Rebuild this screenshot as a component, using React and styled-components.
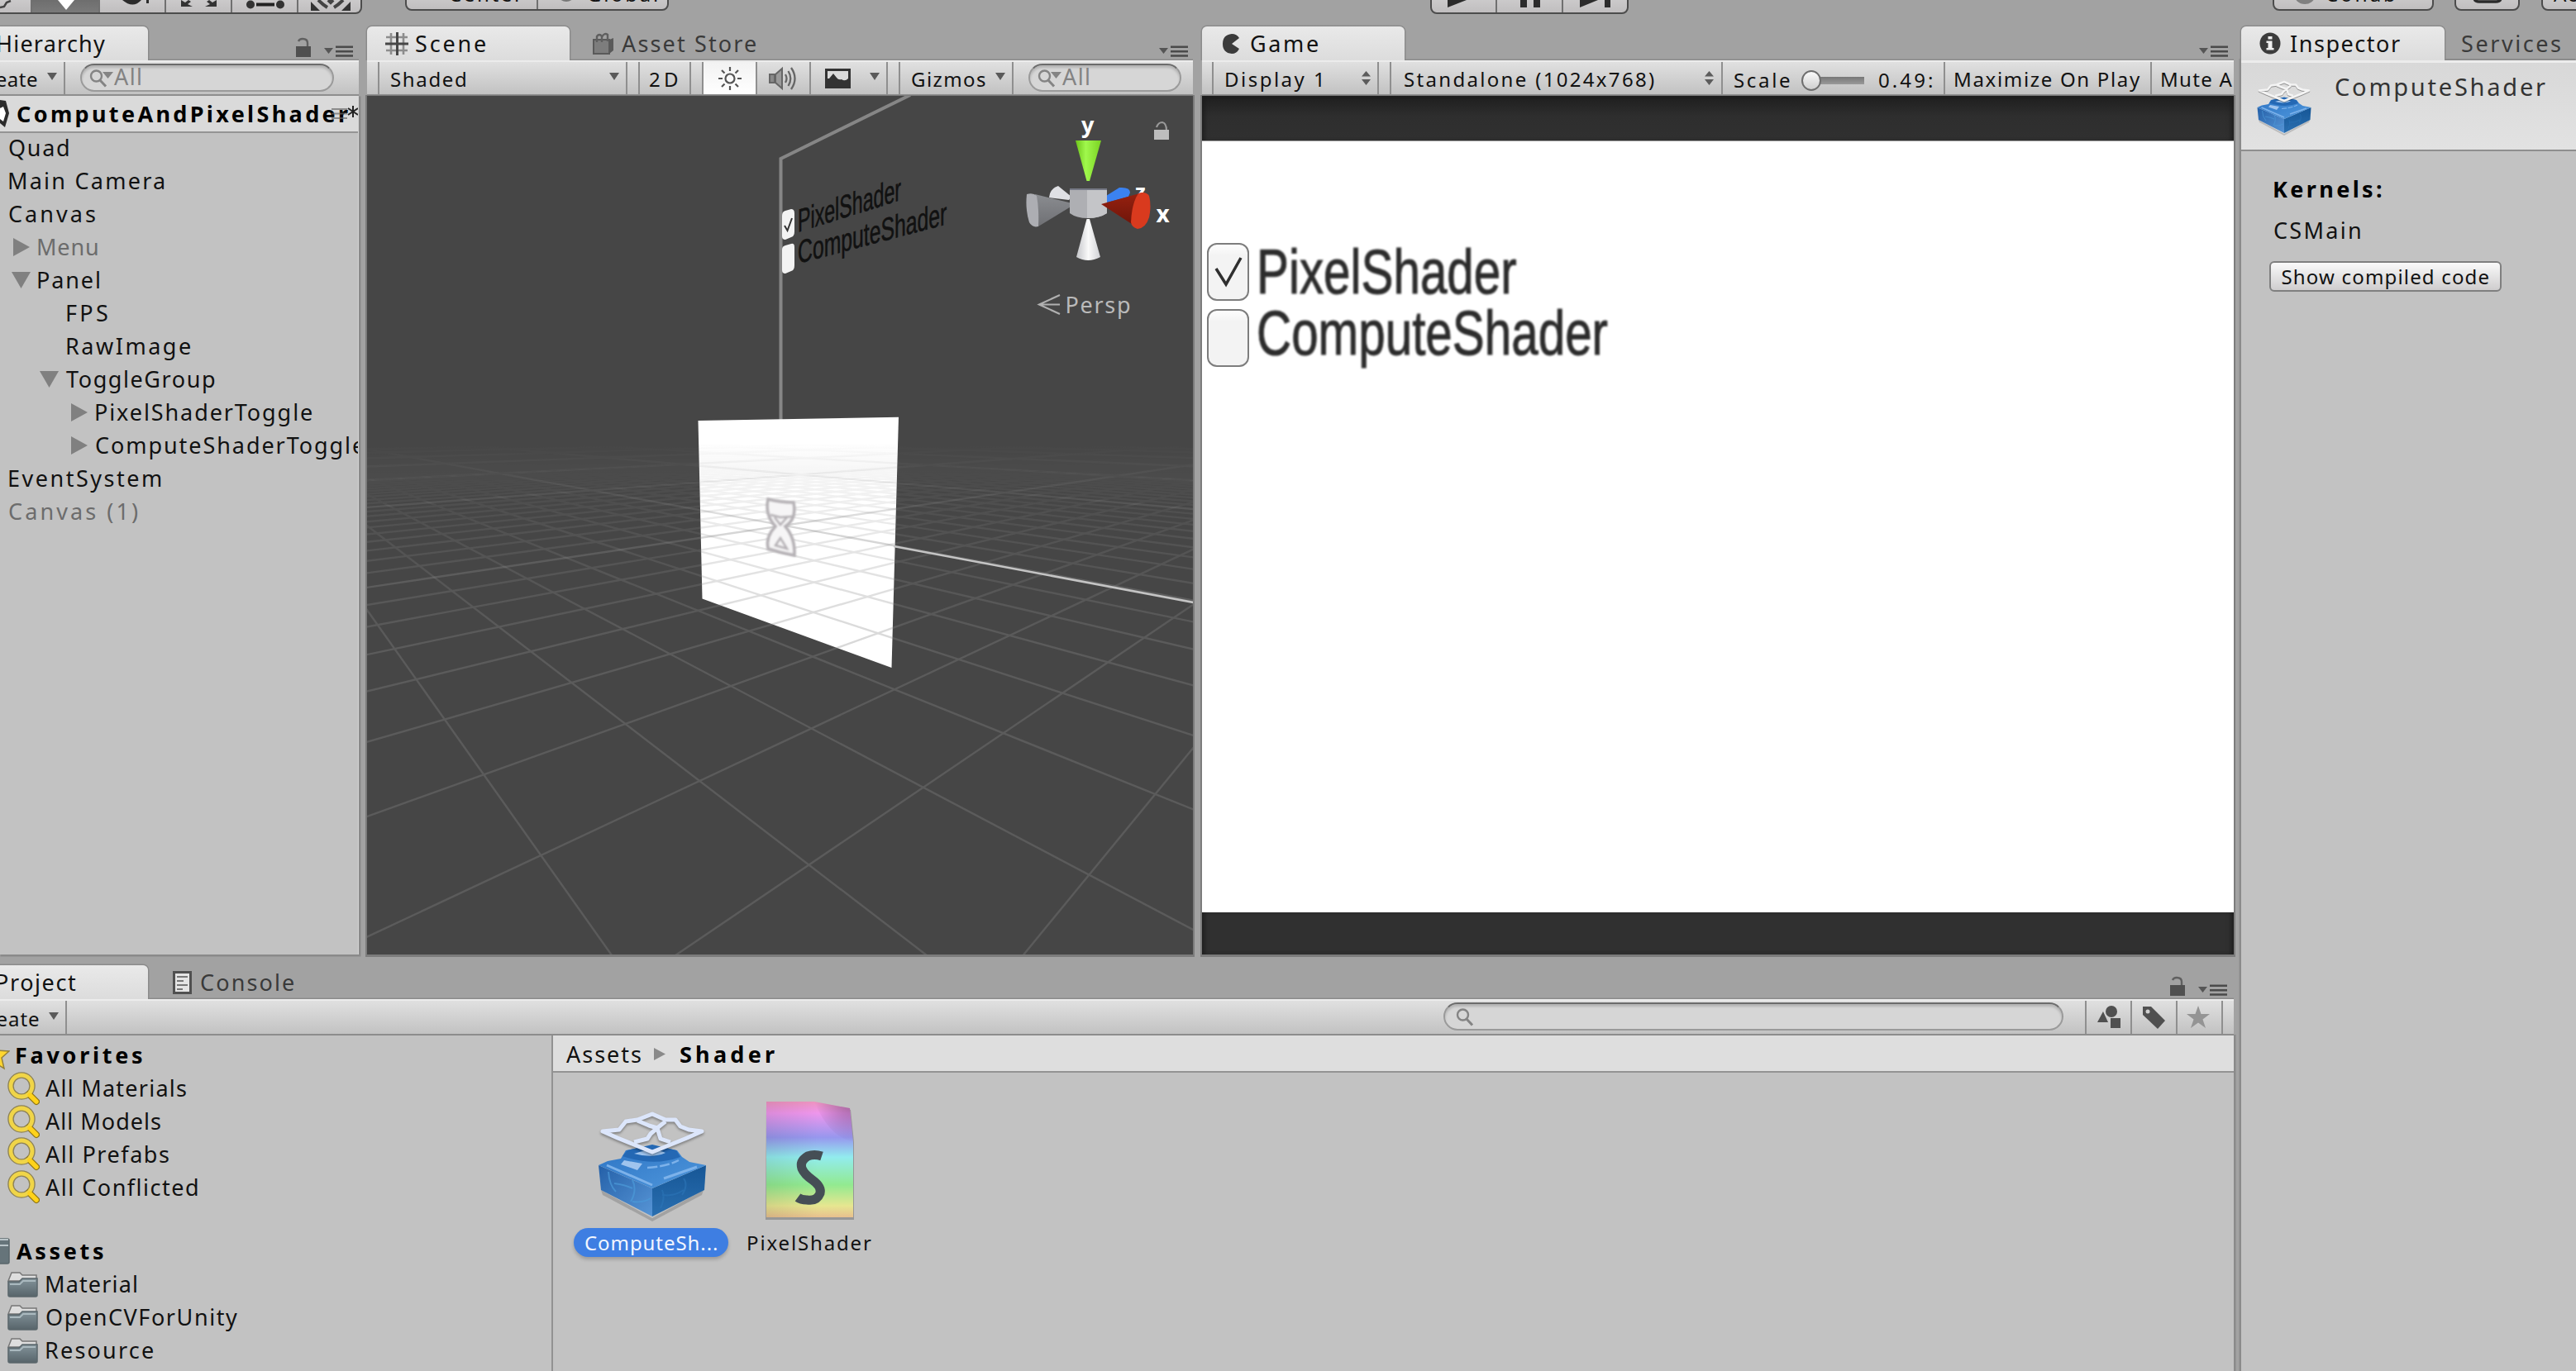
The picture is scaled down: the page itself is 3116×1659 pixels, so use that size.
import React from "react";
import styled, { createGlobalStyle, css } from "styled-components";

const FONT = '"Noto Sans", "DejaVu Sans", sans-serif';

const Global = createGlobalStyle`
  html, body { margin: 0; padding: 0; background: #a2a2a2; overflow: hidden; }
  * { box-sizing: border-box; }
  svg { display: block; flex: none; }
`;

/* ---------- text ---------- */

const ctx = document.createElement("canvas").getContext("2d");
const fitCache = {};
function fit(text, size, weight, width) {
  const key = [text, size, weight, width].join("|");
  if (!fitCache[key]) {
    ctx.font = `${weight} ${size}px ${FONT}`;
    const m = ctx.measureText(text);
    const ink = m.actualBoundingBoxRight + m.actualBoundingBoxLeft;
    fitCache[key] = {
      letterSpacing: `${((width - ink) / (text.length - 1)).toFixed(3)}px`,
      textIndent: `${m.actualBoundingBoxLeft.toFixed(2)}px`,
    };
  }
  return fitCache[key];
}

const Text = styled.span`
  display: block;
  flex: none;
  width: ${(p) => p.$w}px;
  margin-left: ${(p) => p.$ml || 0}px;
  margin-bottom: ${(p) => p.$lift || 0}px;
  padding-top: ${(p) => p.$drop || 0}px;
  font-family: ${FONT};
  font-size: ${(p) => p.$size}px;
  font-weight: ${(p) => p.$weight};
  color: ${(p) => p.$color};
  white-space: pre;
  line-height: 36px;
`;

function Label({ children, w, size = 27, weight = 400, color = "#111", ml, drop, lift }) {
  return (
    <Text $w={w} $size={size} $weight={weight} $color={color} $ml={ml} $drop={drop} $lift={lift} style={fit(children, size, weight, w)}>
      {children}
    </Text>
  );
}

/* ---------- frame ---------- */

const Root = styled.div`
  width: 3116px;
  height: 1659px;
  overflow: hidden;
  display: flex;
  flex-direction: column;
  background: #a2a2a2;
`;
const TopBar = styled.div`
  height: 32px;
  flex: none;
  display: flex;
  align-items: flex-start;
  overflow: hidden;
`;
const Workspace = styled.div`
  flex: 1;
  display: flex;
  gap: 9px;
`;
const MainColumn = styled.div`
  width: 2702px;
  flex: none;
  display: flex;
  flex-direction: column;
  gap: 13px;
`;
const UpperRow = styled.div`
  height: 1123px;
  flex: none;
  display: flex;
`;
const Panel = styled.section`
  width: ${(p) => p.$w}px;
  margin-left: ${(p) => p.$ml || 0}px;
  flex: none;
  display: flex;
  flex-direction: column;
`;
const ProjectPanel = styled.section`
  flex: 1;
  display: flex;
  flex-direction: column;
`;
const TabRow = styled.div`
  height: 41px;
  flex: none;
  display: flex;
  align-items: stretch;
`;
const Tab = styled.div`
  width: ${(p) => p.$w}px;
  padding-left: ${(p) => p.$pl || 0}px;
  flex: none;
  display: flex;
  align-items: center;
  overflow: hidden;
  ${(p) =>
    p.$active &&
    css`
      background: linear-gradient(#e9e9e9, #dcdcdc);
      border-radius: ${p.$cut ? "0 6px 0 0" : "6px 6px 0 0"};
      box-shadow: 0 0 0 1.5px #8b8b8b;
      clip-path: inset(-2px -2px 0 -2px);
    `}
`;
const TabMenu = styled.div`
  margin-left: auto;
  padding-right: ${(p) => p.$pr}px;
  display: flex;
  align-items: flex-end;
  padding-bottom: 4px;
  gap: 14px;
`;
const Strip = styled.div`
  height: ${(p) => p.$h || 43}px;
  flex: none;
  display: flex;
  align-items: stretch;
  overflow: hidden;
  border-top: 2px solid #ececec;
  border-bottom: 2px solid #8e8e8e;
  background: linear-gradient(#e0e0e0, #c2c2c2);
  box-shadow: 0 -1.5px 0 #8b8b8b;
`;
const Cell = styled.div`
  width: ${(p) => p.$w}px;
  padding-left: ${(p) => p.$pl || 0}px;
  flex: none;
  display: flex;
  align-items: center;
  border-right: ${(p) => (p.$plain ? "none" : "2px solid #8f8f8f")};
  background: ${(p) => (p.$on ? "linear-gradient(#f2f2f2, #ffffff)" : "none")};
`;
const SearchBox = styled.div`
  width: ${(p) => p.$w}px;
  height: 34px;
  margin: 2px 0 0 ${(p) => p.$ml}px;
  padding-left: ${(p) => p.$pl || 9}px;
  flex: none;
  display: flex;
  align-items: center;
  border-radius: 17px;
  border: 2px solid #9a9a9a;
  border-top-color: #6c6c6c;
  background: #d6d6d6;
  box-shadow: inset 0 3px 3px rgba(0, 0, 0, 0.16);
`;

/* ---------- top bar ---------- */

const ButtonGroup = styled.div`
  display: flex;
  flex: none;
  height: 50px;
  margin-top: ${(p) => p.$bottom - 50}px;
  margin-left: ${(p) => p.$ml || 0}px;
  border: 2px solid #4c4c4c;
  border-left-width: ${(p) => (p.$cut ? 0 : 2)}px;
  border-radius: ${(p) => (p.$cut ? "0 8px 8px 0" : "8px")};
  background: linear-gradient(#e2e2e2, #c0bebf);
  overflow: hidden;
`;
const ToolButton = styled.div`
  width: ${(p) => p.$w}px;
  padding-left: ${(p) => p.$pl || 0}px;
  flex: none;
  display: flex;
  align-items: flex-end;
  border-right: ${(p) => (p.$last ? "none" : "2px solid #707070")};
  background: ${(p) => (p.$on ? "linear-gradient(#555, #7a7a7a)" : "none")};
`;

/* ---------- hierarchy ---------- */

const ListBody = styled.div`
  flex: 1;
  overflow: hidden;
  background: #c2c2c2;
  border-right: 1px solid #d4d4d4;
  box-shadow: 1.5px 1.5px 0 1px #8a8a8a;
`;
const SceneHeader = styled.div`
  height: 45px;
  display: flex;
  align-items: center;
  background: #dadada;
  border-bottom: 2px solid #949494;
  overflow: hidden;
`;
const SceneMenu = styled.div`
  display: flex;
  align-items: center;
  margin-left: -21px;
`;
const TreeRow = styled.div`
  height: 40px;
  display: flex;
  align-items: center;
  padding-left: ${(p) => p.$indent}px;
  padding-bottom: 5px;
`;
const ArrowSlot = styled.span`
  width: 35px;
  margin-left: -35px;
  flex: none;
`;

/* ---------- scene / game ---------- */

const SceneView = styled.div`
  flex: 1;
  background: #464646;
  box-shadow: 0 1px 0 2px #7c7c7c;
`;
const GameView = styled.div`
  flex: 1;
  display: flex;
  flex-direction: column;
  background: #303030;
  box-shadow: 0 1px 0 2px #7c7c7c;
`;
const GameBand = styled.div`
  height: ${(p) => p.$h}px;
  flex: none;
  background: ${(p) => (p.$top ? "linear-gradient(#1e1e1e, #2e2e2e 45%, #303030)" : "#303030")};
  box-shadow: inset 6px 0 6px -4px #1a1a1a, inset -6px 0 6px -4px #1a1a1a;
`;
const GameScreen = styled.div`
  flex: 1;
  background: #fff;
  border-top: 1px solid #999;
  padding: 123px 0 0 6px;
  display: flex;
  flex-direction: column;
  gap: 10px;
`;
const ToggleRow = styled.div`
  display: flex;
  height: 70px;
`;
const CheckBox = styled.div`
  width: 51px;
  height: 70px;
  flex: none;
  display: flex;
  align-items: center;
  justify-content: center;
  border: 2px solid #7d7d7d;
  border-radius: 12px;
  background: linear-gradient(#fdfdfd, #f3f3f3 20%);
`;
const ToggleText = styled.div`
  margin: ${(p) => p.$mt}px 0 0 9px;
  height: 86px;
  line-height: 86px;
  white-space: nowrap;
  font-family: "Liberation Sans", Arial, sans-serif;
  font-size: 76px;
  color: #2c2c2c;
  -webkit-text-stroke: 1px #2c2c2c;
  transform: scaleX(0.768);
  transform-origin: 0 0;
  filter: blur(1.2px);
`;

const Slider = styled.div`
  width: 76px;
  height: 24px;
  margin: 6px 0 0 14px;
  flex: none;
  display: flex;
  align-items: center;
  background: linear-gradient(#777, #999) 12px 50% / 64px 9px no-repeat;
`;
const Knob = styled.div`
  width: 24px;
  height: 25px;
  border-radius: 50%;
  border: 2px solid #6e6e6e;
  background: linear-gradient(#fafafa, #cfcfcf);
`;

/* ---------- project ---------- */

const ProjectSplit = styled.div`
  flex: 1;
  display: flex;
  background: #c2c2c2;
  box-shadow: 1.5px 0 0 1px #8a8a8a;
`;
const FolderTree = styled.div`
  width: 669px;
  height: 406px;
  overflow: hidden;
  flex: none;
  padding-top: 6px;
  border-right: 2px solid #929292;
`;
const FolderRow = styled.div`
  height: 39.8px;
  display: flex;
  align-items: center;
  padding-bottom: 3px;
  margin-top: ${(p) => p.$mt || 0}px;
`;
const IconSlot = styled.span`
  width: ${(p) => p.$w}px;
  padding-left: ${(p) => p.$pl || 0}px;
  flex: none;
  overflow: hidden;
`;
const AssetArea = styled.div`
  flex: 1;
  display: flex;
  flex-direction: column;
`;
const Breadcrumb = styled.div`
  height: 45px;
  display: flex;
  align-items: center;
  padding: 2px 0 0 16px;
  background: #dedede;
  border-bottom: 2px solid #939393;
`;
const AssetGrid = styled.div`
  display: flex;
  padding: 34px 0 0 25px;
`;
const Asset = styled.div`
  width: ${(p) => p.$w}px;
  flex: none;
  display: flex;
  flex-direction: column;
  align-items: center;
  gap: 8px;
`;
const AssetName = styled.div`
  width: ${(p) => p.$w}px;
  height: 35px;
  display: flex;
  align-items: center;
  justify-content: center;
  border-radius: 18px;
  background: ${(p) => (p.$on ? "#3e7ee2" : "none")};
  box-shadow: ${(p) => (p.$on ? "0 3px 4px rgba(0,0,0,.2)" : "none")};
`;

/* ---------- inspector ---------- */

const InspectorBody = styled.div`
  flex: 1;
  background: #c2c2c2;
  box-shadow: -1.5px -1px 0 1px #8b8b8b;
`;
const InspectorHeader = styled.div`
  height: 110px;
  display: flex;
  align-items: flex-start;
  padding: 20px 0 0 18px;
  border-top: 3px solid #ececec;
  border-bottom: 2px solid #8e8e8e;
  background: linear-gradient(#d8d8d8, #e2e2e2);
`;
const InspectorContent = styled.div`
  padding: 28px 0 0 34px;
  display: flex;
  flex-direction: column;
  align-items: flex-start;
`;
const PushButton = styled.button`
  width: 281px;
  height: 37px;
  margin: 19px 0 0 0;
  padding: 0;
  display: flex;
  align-items: center;
  justify-content: center;
  text-align: left;
  border: 2px solid #7f7f7f;
  border-radius: 6px;
  background: linear-gradient(#fafafa, #cfcdce);
`;
const Block = styled.div`
  margin-left: ${(p) => p.$ml || 0}px;
  margin-top: ${(p) => p.$mt || 0}px;
`;

/* ---------- icons ---------- */

const Lock = ({ color = "#505050" }) => (
  <svg width="20" height="24" viewBox="0 0 20 24">
    <path d="M4 5Q5 2 9 2Q15 2 15 7V12" fill="none" stroke={color} strokeWidth="2.4" opacity=".8" />
    <rect x="1" y="11" width="18" height="13" fill={color} />
  </svg>
);
const MenuGlyph = () => (
  <svg width="36" height="14" viewBox="0 0 36 14">
    <path d="M1 3H12L6.500 10Z" fill="#555" />
    <path d="M15 1.700H36M15 7.200H36M15 12.500H36" stroke="#4a4a4a" strokeWidth="2.600" />
  </svg>
);
const Down = () => (
  <svg width="12" height="9" viewBox="0 0 12 9">
    <path d="M0 0H12L6 9Z" fill="#5a5a5a" />
  </svg>
);
const UpDown = () => (
  <svg width="11" height="17" viewBox="0 0 11 17">
    <path d="M0 6.500L5.500 0L11 6.500ZM0 10H11L5.500 17Z" fill="#5c5c5c" />
  </svg>
);
const Lens = ({ arrow }) => (
  <svg width="30" height="24" viewBox="0 0 30 24">
    <circle cx="8.500" cy="10" r="6.500" fill="none" stroke="#848484" strokeWidth="2.400" />
    <path d="M13 15L20 22.500" stroke="#848484" strokeWidth="3" />
    {arrow && <path d="M16 5H29L22.500 13Z" fill="#848484" />}
  </svg>
);
const Triangle = ({ open }) => (
  <svg width="24" height="22" viewBox="0 0 24 22">
    {open ? <path d="M0 1H23L11.500 21Z" fill="#808080" /> : <path d="M3 0V22L23 11Z" fill="#808080" />}
  </svg>
);
const HashIcon = () => (
  <svg width="28" height="28" viewBox="0 0 28 28">
    <path d="M7 1V27M22 1V27M1 6H27M1 22H27" stroke="#8d8d8d" strokeWidth="2.600" />
    <path d="M14.500 0V28M0 14H28" stroke="#464646" strokeWidth="3" />
  </svg>
);
const BagIcon = () => (
  <svg width="27" height="28" viewBox="0 0 27 28">
    <path d="M1 9H20V26H1Z" fill="#7d7d7d" stroke="#5a5a5a" strokeWidth="2" />
    <path d="M20 9L25 7V22L20 26Z" fill="#5a5a5a" />
    <path d="M5 12V5Q8 1 11 5V12M11 6Q14 0 18 3V11" fill="none" stroke="#5f5f5f" strokeWidth="2.400" />
  </svg>
);
const PacIcon = () => (
  <svg width="22" height="24" viewBox="0 0 22 24">
    <path d="M20 5Q17 0 11 0Q0 1 0 12Q0 23 11 24Q17 24 20 18L11 12Z" fill="#3b3b3b" />
  </svg>
);
const InfoIcon = () => (
  <svg width="26" height="27" viewBox="0 0 26 27">
    <ellipse cx="13" cy="13.500" rx="12.500" ry="13" fill="#3c3c3c" />
    <path d="M10.500 5H15.500V8.500H10.500ZM8.500 10.500H15.500V19H17.500V21.500H8.500V19H10.500V13H8.500Z" fill="#f0f0f0" />
  </svg>
);
const ConsoleIcon = () => (
  <svg width="23" height="28" viewBox="0 0 23 28">
    <rect x="1.500" y="1.500" width="20" height="25" fill="#e4e4e4" stroke="#505050" strokeWidth="3" />
    <path d="M5 7H18M5 12H13M5 17H18M5 22H12" stroke="#777" strokeWidth="2" />
  </svg>
);
const SunIcon = () => (
  <svg width="28" height="28" viewBox="0 0 28 28" fill="none" stroke="#555" strokeWidth="2.200">
    <circle cx="14" cy="14" r="5.500" />
    <path d="M14 0V5M14 23V28M0 14H5M23 14H28M4 4L7.500 7.500M20.500 20.500L24 24M24 4L20.500 7.500M7.500 20.500L4 24" />
  </svg>
);
const SpeakerIcon = () => (
  <svg width="34" height="30" viewBox="0 0 34 30" fill="none" stroke="#666" strokeWidth="2">
    <path d="M1 10H7V20H1Z" fill="#888" />
    <path d="M8 10L16 3V27L8 20Z" fill="#9a9a9a" />
    <path d="M20 10Q23 15 20 20M23.500 6Q29 15 23.500 24M27 2Q36 15 27 28" strokeWidth="2.300" />
  </svg>
);
const PictureIcon = () => (
  <svg width="31" height="24" viewBox="0 0 31 24">
    <rect width="31" height="24" fill="#333" />
    <path d="M3 3H28V12Q24 16 20 13Q16 14 14 11L10 6L5 12H3Z" fill="#dadada" />
  </svg>
);
const YellowLens = () => (
  <svg width="40" height="41" viewBox="0 0 40 41">
    <g fill="none" strokeLinecap="round">
      <circle cx="18" cy="17" r="13" stroke="#8d8257" strokeWidth="7.500" />
      <path d="M27 27L36 36" stroke="#8d7417" strokeWidth="8" />
      <circle cx="18" cy="17" r="13" stroke="#f0d548" strokeWidth="4.800" />
      <path d="M28 28L36 36" stroke="#ffd21a" strokeWidth="5.500" />
    </g>
  </svg>
);
const FolderIcon = () => (
  <svg width="37" height="32" viewBox="0 0 37 32">
    <defs>
      <linearGradient id="fold" x1="0" y1="0" x2="0" y2="1">
        <stop offset="0" stopColor="#83939a" />
        <stop offset="1" stopColor="#57646a" />
      </linearGradient>
    </defs>
    <path d="M1 12L5 2H15L18 5H35V12Z" fill="#dedede" stroke="#777" strokeWidth="1.500" />
    <path d="M1 13H14L18 9H36V29Q36 31 34 31H3Q1 31 1 29Z" fill="url(#fold)" stroke="#59666b" strokeWidth="1.500" />
    <path d="M3 16H15L19 12H34" fill="none" stroke="#a9b8be" strokeWidth="1.800" />
  </svg>
);
const UnityMark = () => (
  <svg width="12" height="36" viewBox="0 0 12 36">
    <path d="M0 1L7 2L11 17L6 34L0 29V23L3 18L0 10Z" fill="#2b2b2b" />
    <path d="M0 11L4 9L7 17L4 27L0 24Z" fill="#fff" />
  </svg>
);
const HalfStar = () => (
  <svg width="12" height="36" viewBox="0 0 12 36">
    <path d="M-8 2L-3 12L11 13L2 21L5 34L-8 26Z" fill="#ffd630" stroke="#94803a" strokeWidth="1.500" />
  </svg>
);
const ShapesIcon = () => (
  <svg width="28" height="28" viewBox="0 0 28 28" fill="#505050">
    <path d="M0 20L7 7L13 20Z" />
    <circle cx="17" cy="7" r="7" />
    <rect x="16" y="15" width="12" height="12" />
  </svg>
);
const TagIcon = () => (
  <svg width="29" height="28" viewBox="0 0 29 28">
    <path d="M1 1H11L28 18L19 28L1 11Z" fill="#505050" />
    <circle cx="7" cy="7" r="2.500" fill="#d0d0d0" />
  </svg>
);
const StarIcon = () => (
  <svg width="28" height="28" viewBox="0 0 28 28">
    <path d="M14 0L17.500 10H28L19.500 16.500L23 27L14 20.500L5 27L8.500 16.500L0 10H10.500Z" fill="#949494" />
  </svg>
);

const ComputeIcon = ({ size = 136, net = "#dce6fb" }) => (
  <svg width={size} height={size} viewBox="0 0 136 136">
    <defs>
      <linearGradient id="cl" x1="0" y1="0" x2="1" y2="1">
        <stop offset="0" stopColor="#2460a8" />
        <stop offset="1" stopColor="#5795d6" />
      </linearGradient>
      <linearGradient id="cr" x1="0" y1="0" x2="0" y2="1">
        <stop offset="0" stopColor="#165696" />
        <stop offset="1" stopColor="#2a6fb0" />
      </linearGradient>
      <linearGradient id="ct" x1="0" y1="0" x2="1" y2="1">
        <stop offset="0" stopColor="#2d74c4" />
        <stop offset="1" stopColor="#4f97dc" />
      </linearGradient>
    </defs>
    <path d="M6 98L68 132L130 98L128 104L68 136L8 104Z" fill="#000" opacity=".16" />
    <path d="M3 68L68 96V130L6 98Z" fill="url(#cl)" />
    <path d="M133 68L68 96V130L131 98Z" fill="url(#cr)" />
    <path d="M3 68L14 63L30 60L36 50L68 44L98 50L104 58L113 64L133 68L68 96Z" fill="url(#ct)" />
    <path d="M32 57L38 50L68 43L97 50L102 58Q70 70 32 57Z" fill="#2468b4" />
    <path d="M46 54Q68 46 84 53Q68 60 46 54ZM34 62L56 66L50 74L30 67Z" fill="#9fc4ee" />
    <path d="M13 68L68 92M122 70L82 84" fill="none" stroke="#7db2ea" strokeWidth="3" />
    <path d="M62 71Q84 70 100 62" fill="none" stroke="#7db2ea" strokeWidth="2.500" strokeDasharray="12 3" />
    <path d="M15 76Q16 92 24 100M22 90Q36 92 44 96M44 86Q50 98 42 112M44 112Q56 114 66 108" fill="none" stroke="#4b9ad8" strokeWidth="2" opacity=".7" />
    <path d="M80 98Q84 108 78 120M106 84Q112 92 104 104M80 104Q94 106 106 98" fill="none" stroke="#2c75b8" strokeWidth="2" opacity=".6" />
    <g fill="none" stroke={net} strokeWidth="5" strokeLinejoin="round" style={{ filter: "drop-shadow(0 2px 1.500px rgba(0,0,0,.35))" }}>
      <path d="M8 27L28 25L36 15L50 13L68 6L84 13L96 13L102 21L112 25L128 27L110 35L68 52L26 35Z" />
      <path d="M50 14L64 20L74 23L84 15M74 23L66 30L62 36L46 40M74 23L78 36L90 40" />
    </g>
  </svg>
);

const ShaderFileIcon = () => (
  <svg width="112" height="146" viewBox="0 0 112 146">
    <defs>
      <linearGradient id="rain" x1="0" y1="0" x2="0" y2="1">
        <stop offset="0" stopColor="#ee94c0" />
        <stop offset=".1" stopColor="#ee96ec" />
        <stop offset=".31" stopColor="#9797ee" />
        <stop offset=".48" stopColor="#92ecee" />
        <stop offset=".72" stopColor="#92ea90" />
        <stop offset=".9" stopColor="#e6e690" />
        <stop offset="1" stopColor="#e8c08e" />
      </linearGradient>
      <linearGradient id="shadeL" x1="0" y1="0" x2="1" y2="0">
        <stop offset="0" stopColor="#000" stopOpacity=".08" />
        <stop offset=".6" stopColor="#000" stopOpacity="0" />
      </linearGradient>
      <radialGradient id="curl" cx="1" cy="0" r="1">
        <stop offset="0" stopColor="#50305a" stopOpacity=".5" />
        <stop offset="1" stopColor="#50305a" stopOpacity="0" />
      </radialGradient>
    </defs>
    <path d="M3 3H61L105 11L109 50V144H2Z" fill="#000" opacity=".22" />
    <path d="M3 1H61L104 9L108 50V141H3Z" fill="url(#rain)" />
    <path d="M3 1H61L104 9L108 50V141H3Z" fill="url(#shadeL)" />
    <path d="M61 1L104 9L108 50Q79 44 61 1Z" fill="url(#curl)" />
    <path d="M70 67Q61 64 53 67Q43 73 46 82Q49 89 59 96Q70 104 68 112Q64 122 52 120Q45 120 41 117" fill="none" stroke="#454e55" strokeWidth="11" />
  </svg>
);

/* ---------- scene drawing ---------- */

const VPR = [1763.5, 513.5];
const VPL = [285.6, 513.5];
const K = 0.688;
const gridLines = [];
for (let d = -1; d <= 70; d++) {
  const s = (1192 / (1068 + 2278 * 0.2138 * d)) * K;
  gridLines.push({ k: "d" + d, major: (((d - 7) % 10) + 10) % 10 === 0, x1: VPL[0], x2: 1600, y2: VPL[1] + s * (1600 - VPL[0]) });
}
for (let u = -1; u <= 70; u++) {
  const s = (1192 / (1210 + 2278 * 0.236 * u)) * K;
  gridLines.push({ k: "u" + u, major: (((u - 8) % 10) + 10) % 10 === 0, x1: VPR[0], x2: 400, y2: VPR[1] + s * (VPR[0] - 400) });
}

function GridLayer({ major }) {
  return (
    <g stroke="#888" strokeWidth="2.400" opacity={major ? 0.34 : 0.32} mask={major ? "url(#fadeMajor)" : "url(#fadeMinor)"}>
      {gridLines
        .filter((l) => l.major === major)
        .map((l) => (
          <line key={l.k} x1={l.x1} y1={513.5} x2={l.x2} y2={l.y2} />
        ))}
    </g>
  );
}

function SceneDrawing() {
  return (
    <svg width="999" height="1039" viewBox="444 115 999 1039">
      <defs>
        <linearGradient id="fmin" gradientUnits="userSpaceOnUse" x1="0" y1="535" x2="0" y2="780">
          <stop offset="0" stopColor="#000" />
          <stop offset=".12" stopColor="#333" />
          <stop offset=".45" stopColor="#999" />
          <stop offset="1" stopColor="#fff" />
        </linearGradient>
        <linearGradient id="fmaj" gradientUnits="userSpaceOnUse" x1="0" y1="535" x2="0" y2="640">
          <stop offset="0" stopColor="#000" />
          <stop offset="1" stopColor="#fff" />
        </linearGradient>
        <mask id="fadeMinor" maskUnits="userSpaceOnUse" x="400" y="100" width="1100" height="1100">
          <rect x="400" y="100" width="1100" height="1100" fill="url(#fmin)" />
        </mask>
        <mask id="fadeMajor" maskUnits="userSpaceOnUse" x="400" y="100" width="1100" height="1100">
          <rect x="400" y="100" width="1100" height="1100" fill="url(#fmaj)" />
        </mask>
        <linearGradient id="green" x1="0" x2="1">
          <stop offset="0" stopColor="#6cc31a" />
          <stop offset=".4" stopColor="#a0f84c" />
          <stop offset="1" stopColor="#7ad222" />
        </linearGradient>
        <linearGradient id="white" x1="0" x2="1">
          <stop offset="0" stopColor="#c3c4c8" />
          <stop offset=".5" stopColor="#fafafa" />
          <stop offset="1" stopColor="#cfd0d4" />
        </linearGradient>
        <linearGradient id="grey" x1="0" y1="0" x2="0" y2="1">
          <stop offset="0" stopColor="#8a8c90" />
          <stop offset="1" stopColor="#6f7074" />
        </linearGradient>
        <linearGradient id="red" x1="0" y1="0" x2="0" y2="1">
          <stop offset="0" stopColor="#98210f" />
          <stop offset="1" stopColor="#6d150a" />
        </linearGradient>
      </defs>

      <path d="M1101 114L944.500 191V510" fill="none" stroke="#868686" strokeWidth="4" />
      <path d="M844.500 508L1087 503.700L1078.500 807L849.500 723.500Z" fill="#fff" />
      <GridLayer major={false} />
      <GridLayer major />
      <path d="M1081 660L1444 728" stroke="#c4c4c4" strokeWidth="2.600" />

      <g fill="none" stroke="#b4b0b4" strokeWidth="3.500" style={{ filter: "blur(1.200px)" }}>
        <path d="M929 603Q944 607 960 607Q964 627 950 636Q962 650 961 671Q944 668 929 663Q926 648 938 636Q925 622 929 603Z" fill="#f6f5f6" />
        <path d="M932 622L944 625L958 624M937 625L944 634L952 625M938 659L944 650L952 663Z" strokeWidth="2.400" />
      </g>

      <g fontFamily='"Liberation Sans", Arial, sans-serif' fontSize="39" fill="#111" stroke="#111" strokeWidth=".6">
        <text transform="matrix(.595 -.186 0 1 965 280)">PixelShader</text>
        <text transform="matrix(.635 -.168 0 1 965 318)">ComputeShader</text>
      </g>
      <path d="M946 260Q946 255 950 254L957 252Q961 252 961 257V279Q961 285 957 286L950 289Q946 289 946 285Z" fill="#f3f3f3" />
      <path d="M946 301Q946 297 950 296L957 294Q961 293 961 298V320Q961 326 957 327L950 330Q946 330 946 326Z" fill="#f3f3f3" />
      <path d="M949 272L952.500 278L958 263" fill="none" stroke="#333" strokeWidth="2" />

      <path d="M1269 238Q1270 227 1280 224L1296 237L1293 241Z" fill="#dfe0e4" />
      <path d="M1338 236L1354 226Q1367 225 1367 232L1365 237L1339 244Z" fill="#3b82f0" />
      <g fontFamily='"Noto Sans", sans-serif' fontWeight="700" fill="#fff" fontSize="27">
        <text x="1308" y="160">y</text>
        <text x="1373" y="241" fontSize="26">z</text>
        <text x="1398.500" y="268" fontSize="28">x</text>
      </g>
      <path d="M1301 169H1332L1318 218H1314.500Z" fill="url(#green)" />
      <path d="M1314.500 264H1318L1331 310Q1316 318 1302 310Z" fill="url(#white)" />
      <path d="M1252 234L1297 245V248L1256 273Z" fill="url(#grey)" />
      <path d="M1242 234Q1250 232 1254 236Q1257 252 1256 273Q1249 275 1245 268Q1240 252 1242 234Z" fill="#adaeb3" />
      <path d="M1294 228H1339V257Q1330 263 1316 263Q1302 263 1294 257Z" fill="#aeafb3" />
      <path d="M1315 228H1339V257Q1330 263 1315 263Z" fill="#c4c5c8" />
      <path d="M1294 228H1339" stroke="#777a86" strokeWidth="2" />
      <path d="M1332 246L1382 232L1372 272Z" fill="url(#red)" />
      <path d="M1377 233Q1386 230 1390 236Q1393 248 1390 262Q1386 275 1376 276Q1369 274 1368 268Q1369 245 1377 233Z" fill="#d93a1e" />
      <path d="M1282 356L1257 367.500L1282 379M1257 367.500H1282" fill="none" stroke="#b0b0b0" strokeWidth="2.200" />
      <text x="1288.500" y="378" textLength="79" fontFamily='"Noto Sans", sans-serif' fontSize="27" fill="#bababa">Persp</text>
      <path d="M1399 153Q1401 147 1406 147Q1411 148 1411 157" fill="none" stroke="#999" strokeWidth="2.200" />
      <rect x="1396" y="156" width="18" height="12" fill="#bdbdbd" />
    </svg>
  );
}

/* ---------- data ---------- */

const tree = [
  { name: "Quad", w: 72, x: 11 },
  { name: "Main Camera", w: 187, x: 11 },
  { name: "Canvas", w: 104, x: 11 },
  { name: "Menu", w: 72, x: 46, arrow: "closed", dim: true },
  { name: "Panel", w: 74, x: 46, arrow: "open" },
  { name: "FPS", w: 49, x: 81 },
  { name: "RawImage", w: 149, x: 81 },
  { name: "ToggleGroup", w: 180, x: 80, arrow: "open" },
  { name: "PixelShaderToggle", w: 261, x: 116, arrow: "closed" },
  { name: "ComputeShaderToggle", w: 324, x: 116, arrow: "closed" },
  { name: "EventSystem", w: 184, x: 11 },
  { name: "Canvas (1)", w: 156, x: 11, dim: true },
];

const favorites = [
  ["All Materials", 170],
  ["All Models", 139],
  ["All Prefabs", 149],
  ["All Conflicted", 184],
];
const folders = [
  ["Material", 109],
  ["OpenCVForUnity", 231],
  ["Resource", 129],
  ["Scenes", 96],
];

/* ---------- panels ---------- */

function Top() {
  return (
    <TopBar>
      <ButtonGroup $bottom={17} $cut>
        <ToolButton $w={39}>
          <svg width="37" height="15" viewBox="0 0 37 15"><path d="M0 9L5 8L8 3L13 1" fill="none" stroke="#444" strokeWidth="2.500" /></svg>
        </ToolButton>
        <ToolButton $w={82} $on>
          <svg width="80" height="15" viewBox="0 0 80 15"><path d="M31 0L41 12L51 0Z" fill="#fff" /></svg>
        </ToolButton>
        <ToolButton $w={80}>
          <svg width="78" height="15" viewBox="0 0 78 15"><path d="M27 0Q40 11 50 0ZM56 0H59V4H56Z" fill="#2c2c2c" /></svg>
        </ToolButton>
        <ToolButton $w={80}>
          <svg width="78" height="15" viewBox="0 0 78 15"><path d="M18 0L23 3L27 0L30 2L26 5L32 8H18ZM61 0L56 3L52 0L49 2L53 5L47 8H61Z" fill="#333" /></svg>
        </ToolButton>
        <ToolButton $w={80}>
          <svg width="78" height="15" viewBox="0 0 78 15"><circle cx="22" cy="5.500" r="5" fill="#333" /><circle cx="58" cy="5.500" r="5" fill="#333" /><path d="M29 5.500H51" stroke="#222" strokeWidth="4" /></svg>
        </ToolButton>
        <ToolButton $w={75} $last>
          <svg width="75" height="15" viewBox="0 0 75 15"><path d="M15 2L26 13H15ZM63 2L52 13H63Z" fill="#333" /><path d="M24 0Q30 6 35 9M54 0Q48 6 43 9M36 0L39 3L42 0" fill="none" stroke="#444" strokeWidth="4" /></svg>
        </ToolButton>
      </ButtonGroup>
      <ButtonGroup $bottom={13} $ml={52}>
        <ToolButton $w={159} $pl={52}><Label w={88} size={24}>Center</Label></ToolButton>
        <ToolButton $w={156} $pl={24} $last>
          <svg width="20" height="16" viewBox="0 0 20 16"><path d="M0 0Q10 11 20 0" fill="none" stroke="#777" strokeWidth="3" /></svg>
          <Label w={84} size={24} ml={16}>Global</Label>
        </ToolButton>
      </ButtonGroup>
      <ButtonGroup $bottom={17} $ml={921}>
        <ToolButton $w={79}><svg width="77" height="15" viewBox="0 0 77 15"><path d="M19 0H42L19 9Z" fill="#2b2b2b" /></svg></ToolButton>
        <ToolButton $w={80}><svg width="78" height="15" viewBox="0 0 78 15"><path d="M28 0H36V9H28ZM44 0H52V9H44Z" fill="#2b2b2b" /></svg></ToolButton>
        <ToolButton $w={77} $last><svg width="77" height="15" viewBox="0 0 77 15"><path d="M20 0H42L20 9ZM50 0H57V9H50Z" fill="#2b2b2b" /></svg></ToolButton>
      </ButtonGroup>
      <ButtonGroup $bottom={13} $ml={779}>
        <ToolButton $w={191} $pl={24} $last>
          <svg width="26" height="12" viewBox="0 0 26 12"><ellipse cx="13" cy="-6" rx="13" ry="12" fill="#808080" /></svg>
          <Label w={83} size={24} ml={13}>Collab</Label>
        </ToolButton>
      </ButtonGroup>
      <ButtonGroup $bottom={13} $ml={25}>
        <ToolButton $w={75} $pl={20} $last>
          <svg width="36" height="12" viewBox="0 0 36 12"><path d="M2 -2Q2 3 8 3H28Q34 3 34 -2" fill="none" stroke="#2b2b2b" strokeWidth="3.500" /></svg>
        </ToolButton>
      </ButtonGroup>
      <ButtonGroup $bottom={13} $ml={26}>
        <ToolButton $w={140} $pl={13} $last><Label w={100} size={24}>Account</Label></ToolButton>
      </ButtonGroup>
    </TopBar>
  );
}

function Hierarchy() {
  return (
    <Panel $w={434}>
      <TabRow>
        <Tab $w={179} $active $cut><Label w={130} ml={-3}>Hierarchy</Label></Tab>
        <TabMenu $pr={7}><Lock /><MenuGlyph /></TabMenu>
      </TabRow>
      <Strip>
        <Cell $w={79}><Label w={75} size={24} ml={-30} drop={2}>Create</Label><Block $ml={12} $mt={-4}><Down /></Block></Cell>
        <SearchBox $w={307} $ml={18}><Lens arrow /><Label w={32} color="#838383" lift={3}>All</Label></SearchBox>
      </Strip>
      <ListBody>
        <SceneHeader>
          <UnityMark />
          <Label w={400} ml={9} weight={700} color="#000">ComputeAndPixelShader</Label>
          <SceneMenu>
            <svg width="34" height="20" viewBox="0 0 34 20"><path d="M1 4H20M1 9.500H20M1 15H20" stroke="#6a6a6a" strokeWidth="2" opacity=".7" /><path d="M27 0V14M21 3L33 11M33 3L21 11" stroke="#222" strokeWidth="2" /></svg>
          </SceneMenu>
        </SceneHeader>
        {tree.map((r) => (
          <TreeRow key={r.name} $indent={r.x}>
            {r.arrow && <ArrowSlot><Block $ml={r.arrow === "open" ? 3 : 2}><Triangle open={r.arrow === "open"} /></Block></ArrowSlot>}
            <Label w={r.w} color={r.dim ? "#6c6c6c" : "#111"}>{r.name}</Label>
          </TreeRow>
        ))}
      </ListBody>
    </Panel>
  );
}

function Scene() {
  return (
    <Panel $w={999} $ml={10}>
      <TabRow>
        <Tab $w={245} $pl={22} $active><HashIcon /><Label w={84} ml={9}>Scene</Label></Tab>
        <Tab $w={260} $pl={28}><BagIcon /><Label w={162} ml={8} color="#3a3a3a">Asset Store</Label></Tab>
        <TabMenu $pr={6}><MenuGlyph /></TabMenu>
      </TabRow>
      <Strip>
        <Cell $w={15} />
        <Cell $w={300} $pl={14}><Label w={90} size={24} drop={2}>Shaded</Label><Block $ml={174} $mt={-4}><Down /></Block></Cell>
        <Cell $w={15} />
        <Cell $w={62} $pl={12}><Label w={34} size={24} drop={2}>2D</Label></Cell>
        <Cell $w={15} />
        <Cell $w={65} $pl={18} $on><SunIcon /></Cell>
        <Cell $w={65} $pl={14}><SpeakerIcon /></Cell>
        <Cell $w={64} $pl={17} $plain><PictureIcon /></Cell>
        <Cell $w={29} $pl={7}><Block $mt={-4}><Down /></Block></Cell>
        <Cell $w={15} />
        <Cell $w={137} $pl={14}><Label w={89} size={24} drop={2}>Gizmos</Label><Block $ml={12} $mt={-4}><Down /></Block></Cell>
        <SearchBox $w={185} $ml={18}><Lens arrow /><Label w={32} color="#838383" lift={3}>All</Label></SearchBox>
      </Strip>
      <SceneView><SceneDrawing /></SceneView>
    </Panel>
  );
}

function Game() {
  return (
    <Panel $w={1248} $ml={11}>
      <TabRow>
        <Tab $w={245} $pl={25} $active><PacIcon /><Label w={81} ml={12}>Game</Label></Tab>
        <TabMenu $pr={7}><MenuGlyph /></TabMenu>
      </TabRow>
      <Strip>
        <Cell $w={14} />
        <Cell $w={200} $pl={15}><Label w={115} size={24} drop={2}>Display 1</Label><Block $ml={49}><UpDown /></Block></Cell>
        <Cell $w={15} />
        <Cell $w={401} $pl={16}><Label w={302} size={24} drop={2}>Standalone (1024x768)</Label><Block $ml={61}><UpDown /></Block></Cell>
        <Cell $w={269} $pl={14}><Label w={67} size={24} drop={4}>Scale</Label><Slider><Knob /></Slider><Label w={64} size={24} ml={18} drop={4}>0.49:</Label></Cell>
        <Cell $w={250} $pl={12}><Label w={224} size={24} drop={2}>Maximize On Play</Label></Cell>
        <Cell $w={99} $pl={12} $plain><Label w={140} size={24} drop={2}>Mute Audio</Label></Cell>
      </Strip>
      <GameView>
        <GameBand $h={54} $top />
        <GameScreen>
          <ToggleRow>
            <CheckBox><svg width="34" height="38" viewBox="0 0 34 38"><path d="M2 15L14 34L32 2" fill="none" stroke="#2f2f2f" strokeWidth="3.500" /></svg></CheckBox>
            <ToggleText $mt={-8}>PixelShader</ToggleText>
          </ToggleRow>
          <ToggleRow>
            <CheckBox />
            <ToggleText $mt={-14}>ComputeShader</ToggleText>
          </ToggleRow>
        </GameScreen>
        <GameBand $h={51} />
      </GameView>
    </Panel>
  );
}

function Project() {
  return (
    <ProjectPanel>
      <TabRow>
        <Tab $w={179} $active $cut><Label w={96} ml={-4}>Project</Label></Tab>
        <Tab $w={200} $pl={30}><ConsoleIcon /><Label w={112} ml={11} color="#3a3a3a">Console</Label></Tab>
        <TabMenu $pr={8}><Lock /><MenuGlyph /></TabMenu>
      </TabRow>
      <Strip $h={44}>
        <Cell $w={81}><Label w={77} size={24} ml={-30} drop={3}>Create</Label><Block $ml={12} $mt={-4}><Down /></Block></Cell>
        <SearchBox $w={750} $ml={1665} $pl={13}><Lens /></SearchBox>
        <Cell $w={28} />
        <Cell $w={55} $pl={13}><ShapesIcon /></Cell>
        <Cell $w={55} $pl={12}><TagIcon /></Cell>
        <Cell $w={55} $pl={11}><StarIcon /></Cell>
      </Strip>
      <ProjectSplit>
        <FolderTree>
          <FolderRow>
            <IconSlot $w={20}><HalfStar /></IconSlot>
            <Label w={152} weight={700} color="#000">Favorites</Label>
          </FolderRow>
          {favorites.map(([name, w]) => (
            <FolderRow key={name}>
              <IconSlot $w={55} $pl={8}><YellowLens /></IconSlot>
              <Label w={w}>{name}</Label>
            </FolderRow>
          ))}
          <FolderRow $mt={38}>
            <IconSlot $w={20}><svg width="12" height="34" viewBox="0 0 12 34"><path d="M-4 2H9Q11 2 11 4V30Q11 32 9 32H-4Z" fill="#66747a" stroke="#59666b" strokeWidth="1.500" /><path d="M-2 3H10M-2 10H10" stroke="#b9c4c8" strokeWidth="2" /></svg></IconSlot>
            <Label w={105} weight={700} color="#000">Assets</Label>
          </FolderRow>
          {folders.map(([name, w]) => (
            <FolderRow key={name}>
              <IconSlot $w={56} $pl={9}><FolderIcon /></IconSlot>
              <Label w={w}>{name}</Label>
            </FolderRow>
          ))}
        </FolderTree>
        <AssetArea>
          <Breadcrumb>
            <Label w={90}>Assets</Label>
            <Block $ml={16}><svg width="14" height="15" viewBox="0 0 14 15"><path d="M0 0V15L14 7.500Z" fill="#8a8a8a" /></svg></Block>
            <Label w={114} ml={18} weight={700} color="#000">Shader</Label>
          </Breadcrumb>
          <AssetGrid>
            <Asset $w={187}>
              <Block $ml={2} $mt={10}><ComputeIcon /></Block>
              <AssetName $w={187} $on><Label w={159} size={24} color="#f2f6ff">ComputeSh...</Label></AssetName>
            </Asset>
            <Asset $w={197}>
              <ShaderFileIcon />
              <AssetName $w={187}><Label w={149} size={24}>PixelShader</Label></AssetName>
            </Asset>
          </AssetGrid>
        </AssetArea>
      </ProjectSplit>
    </ProjectPanel>
  );
}

function Inspector() {
  return (
    <Panel $w={405}>
      <TabRow>
        <Tab $w={246} $pl={22} $active><InfoIcon /><Label w={132} ml={12}>Inspector</Label></Tab>
        <Tab $w={159} $pl={21}><Label w={119} color="#3a3a3a">Services</Label></Tab>
      </TabRow>
      <InspectorBody>
        <InspectorHeader>
          <ComputeIcon size={68} net="#f4f4f4" />
          <Block $ml={28} $mt={-9}><Label w={254} size={29} color="#333">ComputeShader</Label></Block>
        </InspectorHeader>
        <InspectorContent>
          <Block $ml={6}><Label w={130} weight={700} color="#000">Kernels:</Label></Block>
          <Block $ml={6} $mt={14}><Label w={104}>CSMain</Label></Block>
          <PushButton><Label w={250} size={24}>Show compiled code</Label></PushButton>
        </InspectorContent>
      </InspectorBody>
    </Panel>
  );
}

export default function App() {
  return (
    <Root>
      <Global />
      <Top />
      <Workspace>
        <MainColumn>
          <UpperRow>
            <Hierarchy />
            <Scene />
            <Game />
          </UpperRow>
          <Project />
        </MainColumn>
        <Inspector />
      </Workspace>
    </Root>
  );
}
